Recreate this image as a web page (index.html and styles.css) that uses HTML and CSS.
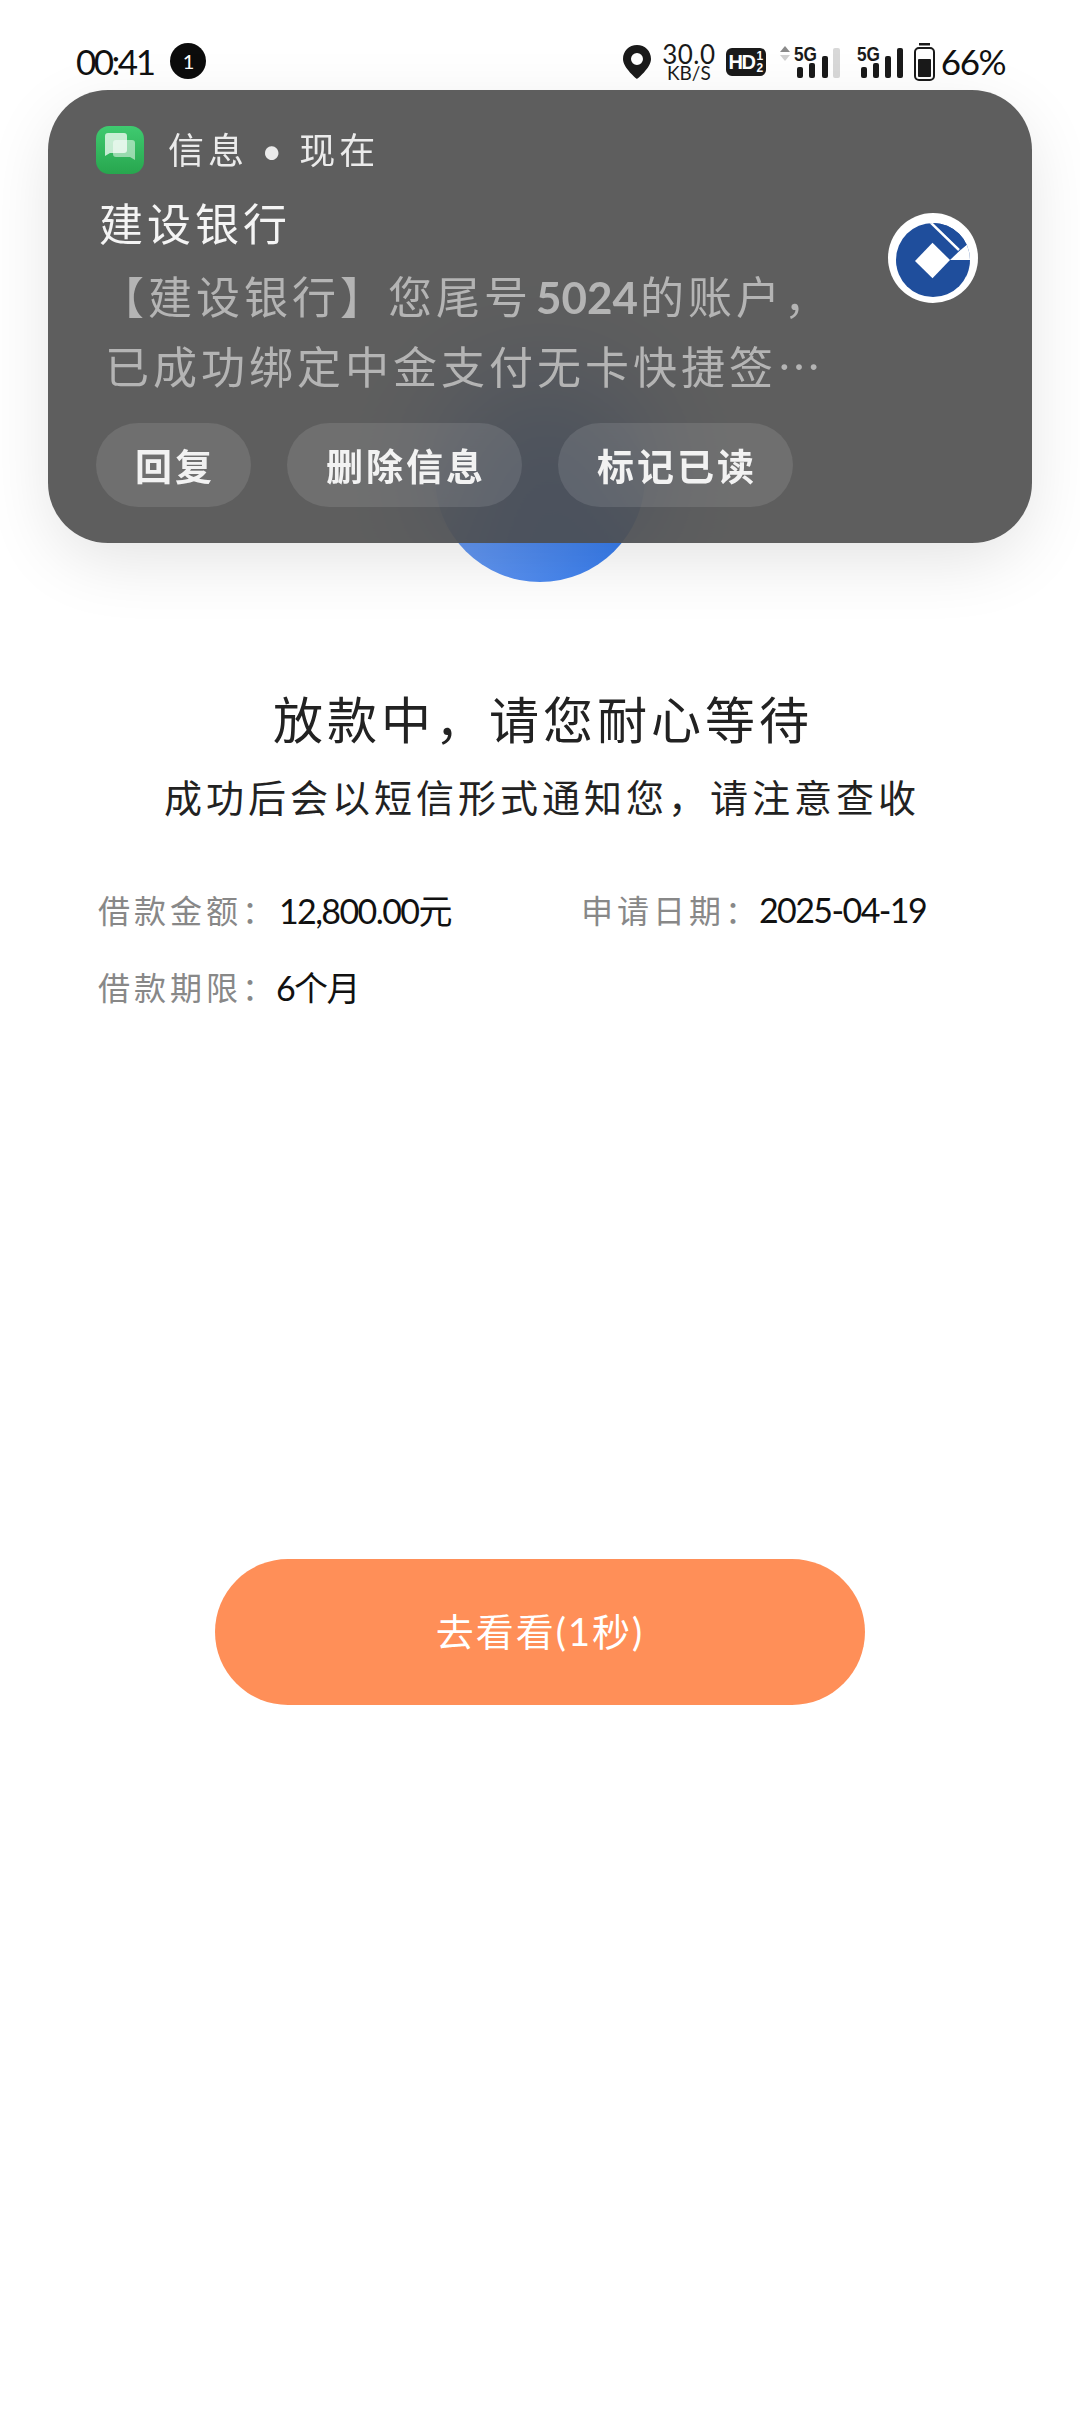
FILE: index.html
```html
<!DOCTYPE html>
<html lang="zh-CN">
<head>
<meta charset="utf-8">
<title>放款中</title>
<link rel="stylesheet" href="styles.css">
</head>
<body>
<div class="page">
  <header class="status-bar">
    <div class="status-left">
      <span class="clock">00:41</span>
      <span class="count-badge">1</span>
    </div>
    <div class="status-right">
      <svg class="pin" width="28" height="34" viewBox="0 0 28 34">
        <path fill="#1a1a1a" fill-rule="evenodd" d="M14 0C6 0 0 6 0 14c0 9 14 20 14 20s14-11 14-20C28 6 22 0 14 0zm0 8a6 6 0 1 1 0 12a6 6 0 0 1 0-12z"/>
      </svg>
      <div class="speed"><span class="speed-num">30.0</span><span class="speed-unit">KB/S</span></div>
      <div class="hd"><span class="hd-text">HD</span><span class="hd-frac"><span>1</span><span>2</span></span></div>
      <svg class="signal-a" width="60" height="38" viewBox="0 0 60 38">
        <path fill="#8a8a8a" d="M5 3l5 6H0z"/>
        <path fill="#d0d0d0" d="M5 18l5-6H0z"/>
        <text class="net" x="14" y="18" textLength="23" lengthAdjust="spacingAndGlyphs">5G</text>
        <rect x="17" y="24" width="6" height="11" rx="2" fill="#1a1a1a"/>
        <rect x="29" y="20" width="6" height="15" rx="2" fill="#1a1a1a"/>
        <rect x="42" y="13" width="6" height="22" rx="2" fill="#1a1a1a"/>
        <rect x="53" y="5" width="7" height="30" rx="2" fill="#d8d8d8"/>
      </svg>
      <svg class="signal-b" width="46" height="38" viewBox="0 0 46 38">
        <text class="net" x="0" y="18" textLength="23" lengthAdjust="spacingAndGlyphs">5G</text>
        <rect x="4" y="24" width="6" height="11" rx="2" fill="#1a1a1a"/>
        <rect x="16" y="20" width="6" height="15" rx="2" fill="#1a1a1a"/>
        <rect x="28" y="13" width="6" height="22" rx="2" fill="#1a1a1a"/>
        <rect x="40" y="5" width="6" height="30" rx="2" fill="#1a1a1a"/>
      </svg>
      <svg class="battery" width="21" height="38" viewBox="0 0 21 38">
        <rect x="5" y="0" width="11" height="2.5" fill="#1a1a1a"/>
        <rect x="1" y="5" width="19" height="32" rx="4" fill="none" stroke="#1a1a1a" stroke-width="2"/>
        <rect x="4" y="16" width="13" height="18" rx="1" fill="#1a1a1a"/>
      </svg>
      <span class="percent">66%</span>
    </div>
  </header>

  <aside class="notice">
    <div class="notice-main">
      <div class="notice-app">
        <svg class="app-icon" width="48" height="48" viewBox="0 0 48 48">
          <defs>
            <linearGradient id="appGreen" x1="0" y1="0" x2="0" y2="1">
              <stop offset="0" stop-color="#3fca70"/>
              <stop offset="1" stop-color="#27a64e"/>
            </linearGradient>
          </defs>
          <rect width="48" height="48" rx="13" fill="url(#appGreen)"/>
          <path fill="#fff" fill-opacity=".5" d="M20 14h16a3 3 0 0 1 3 3v17l-5-3H20a3 3 0 0 1-3-3V17a3 3 0 0 1 3-3z"/>
          <path fill="#fff" fill-opacity=".72" d="M12 7h16a3 3 0 0 1 3 3v14a3 3 0 0 1-3 3H14l-5 3V10a3 3 0 0 1 3-3z"/>
        </svg>
        <span class="app-label">信息 • 现在</span>
      </div>
      <div class="notice-title">建设银行</div>
      <div class="notice-body">
        <div>【建设银行】您尾号<span class="notice-num">5024</span>的账户，</div>
        <div class="notice-line-two">已成功绑定中金支付无卡快捷签…</div>
      </div>
      <div class="notice-actions">
        <span class="action">回复</span>
        <span class="action">删除信息</span>
        <span class="action">标记已读</span>
      </div>
    </div>
    <svg class="bank-logo" width="90" height="90" viewBox="0 0 90 90">
      <defs>
        <clipPath id="logoDisc"><circle cx="45" cy="47" r="37"/></clipPath>
      </defs>
      <circle cx="45" cy="45" r="45" fill="#fff"/>
      <circle cx="45" cy="47" r="37" fill="#1f4e9c"/>
      <g clip-path="url(#logoDisc)">
        <path fill="#fff" d="M62 47L73 36.500L82 29H90V47z"/>
        <path stroke="#fff" stroke-width="2.500" fill="none" d="M38 5L71 37"/>
        <path fill="#1f4e9c" d="M43 7.500L54 6.500L81.500 29L73 36.500z"/>
      </g>
      <path fill="#fff" d="M27 48L44.500 29.700L62 47L44.500 65.300z"/>
    </svg>
  </aside>

  <main class="result">
    <div class="result-disc"></div>
    <h1 class="result-title">放款中，请您耐心等待</h1>
    <p class="result-sub">成功后会以短信形式通知您，请注意查收</p>
    <div class="facts">
      <div class="fact fact-amount"><span class="fact-label">借款金额：</span><span class="fact-value">12,800.00元</span></div>
      <div class="fact"><span class="fact-label">申请日期：</span><span class="fact-value">2025-04-19</span></div>
      <div class="fact"><span class="fact-label">借款期限：</span><span class="fact-value">6个月</span></div>
    </div>
    <button class="go-button">去看看(1秒)</button>
  </main>
</div>
</body>
</html>
```
FILE: styles.css
```css
* { box-sizing: border-box; }

html, body {
  margin: 0;
  padding: 0;
  background: #fff;
}

body {
  font-family: Lato, "Noto Sans CJK SC", sans-serif;
  color: #111;
}

.page {
  position: relative;
  width: 1080px;
  height: 2412px;
  overflow: hidden;
  background: #fff;
}

/* Status bar */
.status-bar {
  display: flex;
  justify-content: space-between;
  align-items: center;
  height: 90px;
  padding: 34px 75px 0 76px;
}

.status-left,
.status-right {
  display: flex;
  align-items: center;
}

.clock {
  padding-bottom: 2px;
  font-size: 35px;
  letter-spacing: -2.5px;
  line-height: 40px;
  color: #111;
}

.count-badge {
  display: flex;
  align-items: center;
  justify-content: center;
  width: 36px;
  height: 36px;
  margin-left: 17px;
  margin-top: -2px;
  border-radius: 50%;
  background: #0c0c0c;
  color: #fff;
  font-size: 20px;
}

.speed {
  display: flex;
  flex-direction: column;
  align-items: center;
  width: 50px;
  margin-left: 13px;
  color: #1a1a1a;
}

.speed-num {
  font-size: 26px;
  line-height: 21px;
  letter-spacing: 0.5px;
}

.speed-unit {
  font-size: 19px;
  line-height: 16px;
}

.hd {
  display: flex;
  align-items: center;
  justify-content: center;
  width: 40px;
  height: 28px;
  margin-left: 12px;
  border-radius: 6px;
  background: #1a1a1a;
  color: #fff;
  font-family: "Liberation Sans", sans-serif;
  font-weight: 700;
}

.hd-text {
  font-size: 20px;
  letter-spacing: -1.5px;
}

.hd-frac {
  display: flex;
  flex-direction: column;
  margin-left: 2px;
  font-size: 12px;
  line-height: 12px;
}

.signal-a { margin-left: 14px; }
.signal-b { margin-left: 17px; }
.battery { margin-left: 11px; }

.net {
  font-family: "Liberation Sans", sans-serif;
  font-weight: 700;
  font-size: 20px;
  fill: #1a1a1a;
}

.percent {
  margin-left: 6px;
  padding-bottom: 2px;
  font-size: 35px;
  letter-spacing: -1.5px;
  line-height: 40px;
  color: #111;
}

/* Floating notification */
.notice {
  position: absolute;
  top: 90px;
  left: 48px;
  display: flex;
  width: 984px;
  height: 453px;
  padding: 36px 54px 0 48px;
  border-radius: 60px;
  background: rgba(74, 74, 74, 0.89);
  -webkit-backdrop-filter: blur(60px);
  backdrop-filter: blur(60px);
  box-shadow: 0 20px 70px -6px rgba(0, 0, 0, 0.12);
}

.notice-main {
  flex: 1;
  min-width: 0;
}

.notice-app {
  display: flex;
  align-items: center;
  height: 48px;
}

.app-icon { flex: none; }

.app-label {
  margin-left: 24px;
  padding-bottom: 4px;
  font-size: 36px;
  letter-spacing: 4px;
  color: #ebebeb;
  white-space: nowrap;
}

.notice-title {
  margin-top: 20px;
  margin-left: 3px;
  font-size: 44px;
  line-height: 60px;
  letter-spacing: 4px;
  color: #f4f4f4;
}

.notice-body {
  margin-top: 7px;
  margin-left: 4px;
  font-family: "Noto Sans CJK SC", Lato, sans-serif;
  font-size: 44px;
  line-height: 68px;
  letter-spacing: 4px;
  color: #b4b4b4;
  white-space: nowrap;
}

.notice-line-two {
  margin-left: 5px;
}

.notice-num {
  font-family: Lato, sans-serif;
  letter-spacing: 0;
  font-size: 44px;
  font-weight: 700;
  padding: 0 2px 0 4px;
}

.notice-actions {
  display: flex;
  gap: 36px;
  margin-top: 24px;
}

.action {
  display: flex;
  align-items: center;
  height: 84px;
  padding: 0 36px 0 39px;
  border-radius: 42px;
  background: rgba(255, 255, 255, 0.1);
  font-size: 37px;
  font-weight: 700;
  letter-spacing: 3px;
  color: #f2f2f2;
  white-space: nowrap;
}

.bank-logo {
  flex: none;
  margin-top: 87px;
}

/* Loan result */
.result {
  display: flex;
  flex-direction: column;
  align-items: center;
}

.result-disc {
  width: 210px;
  height: 210px;
  margin-top: 282px;
  border-radius: 50%;
  background: linear-gradient(90deg, #6a9bf2, #3279ec);
}

.result-title {
  margin: 108px 0 0;
  padding-left: 6px;
  font-size: 50px;
  font-weight: 400;
  line-height: 60px;
  letter-spacing: 4px;
  color: #222;
}

.result-sub {
  margin: 22px 0 0;
  padding-left: 4px;
  font-size: 38px;
  line-height: 50px;
  letter-spacing: 4px;
  color: #222;
}

.facts {
  display: grid;
  grid-template-columns: 483px 1fr;
  row-gap: 27px;
  width: 100%;
  margin-top: 62px;
  padding-left: 98px;
}

.fact {
  display: flex;
  align-items: center;
  height: 50px;
  white-space: nowrap;
}

.fact-label {
  width: 178px;
  font-size: 32px;
  letter-spacing: 4px;
  color: #888;
}

.fact-amount .fact-label {
  width: 181px;
}

.fact-value {
  font-size: 34px;
  letter-spacing: -1.6px;
  color: #111;
}

.go-button {
  display: block;
  width: 650px;
  height: 146px;
  margin-top: 548px;
  padding: 0 0 5px;
  border: 0;
  border-radius: 73px;
  background: #ff8f58;
  color: #fff;
  font-family: inherit;
  font-size: 38px;
  letter-spacing: 2px;
}
```
